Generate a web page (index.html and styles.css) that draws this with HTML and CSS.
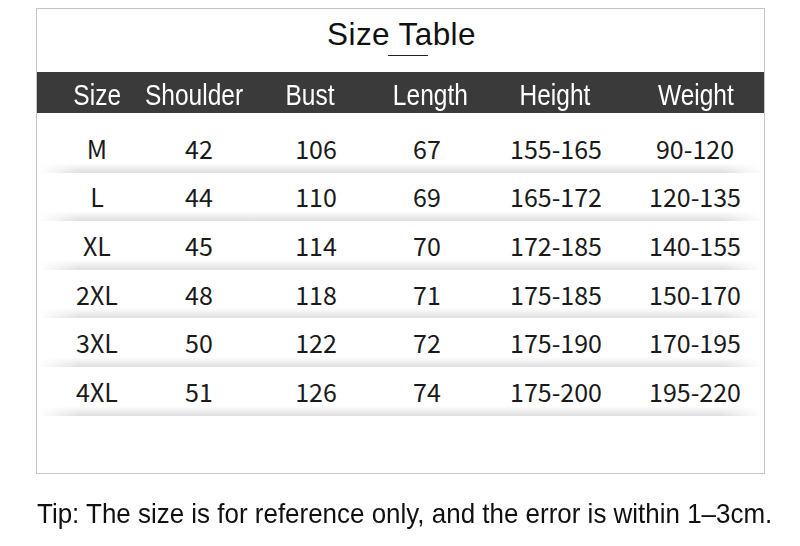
FILE: index.html
```html
<!DOCTYPE html>
<html>
<head>
<meta charset="utf-8">
<link rel="stylesheet" href="styles.css">
</head>
<body>
<div class="page">
  <div class="box">
    <div class="title-area">
      <h1 class="title">Size Table</h1>
      <div class="title-line"></div>
    </div>
    <div class="head">
      <span>Size</span><span>Shoulder</span><span>Bust</span><span>Length</span><span>Height</span><span>Weight</span>
    </div>
    <div class="rows">
      <div class="row"><span>M</span><span>42</span><span>106</span><span>67</span><span>155-165</span><span>90-120</span></div>
      <div class="row"><span>L</span><span>44</span><span>110</span><span>69</span><span>165-172</span><span>120-135</span></div>
      <div class="row"><span>XL</span><span>45</span><span>114</span><span>70</span><span>172-185</span><span>140-155</span></div>
      <div class="row"><span>2XL</span><span>48</span><span>118</span><span>71</span><span>175-185</span><span>150-170</span></div>
      <div class="row"><span>3XL</span><span>50</span><span>122</span><span>72</span><span>175-190</span><span>170-195</span></div>
      <div class="row"><span>4XL</span><span>51</span><span>126</span><span>74</span><span>175-200</span><span>195-220</span></div>
    </div>
  </div>
  <p class="tip">Tip: The size is for reference only, and the error is within 1–3cm.</p>
</div>
</body>
</html>
```

FILE: styles.css
```css
html, body {
  margin: 0;
  padding: 0;
  background: #fff;
}
.page {
  padding: 8px 0 0 36px;
  width: 800px;
  box-sizing: border-box;
}
.box {
  width: 729px;
  height: 466px;
  box-sizing: border-box;
  border: 1px solid #c4c4c4;
  background: #fff;
}
.title-area {
  height: 63px;
  display: flex;
  flex-direction: column;
  align-items: center;
}
.title {
  margin: 8px 0 0 0;
  font-family: "Liberation Sans", Arial, sans-serif;
  font-weight: normal;
  font-size: 31.5px;
  line-height: 34px;
  letter-spacing: 0.4px;
  color: #111;
  padding-left: 2px;
}
.title-line {
  width: 40px;
  height: 1px;
  background: #222;
  margin-top: 4px;
  margin-left: 14px;
}
.head {
  height: 41px;
  background: #3a3a3a;
  display: grid;
  grid-template-columns: 118px 76px 156px 84px 166px 116px;
  justify-items: center;
  padding-left: 1px;
  padding-top: 4px;
  box-sizing: border-box;
  align-items: center;
  font-family: "Liberation Sans", Arial, sans-serif;
  font-size: 29px;
  line-height: 32px;
  color: #fff;
}
.head span {
  display: inline-block;
  transform: scaleX(0.845);
}
.rows {
  padding-top: 11px;
}
.row {
  position: relative;
  height: 48.6px;
  box-sizing: border-box;
  display: grid;
  grid-template-columns: 118px 86px 148px 74px 184px 94px;
  justify-items: center;
  align-items: center;
  padding-left: 1px;
  padding-bottom: 1px;
  font-family: "Noto Sans CJK SC", "Noto Sans", sans-serif;
  font-size: 25px;
  color: #1a1a1a;
}
.row::after {
  content: "";
  position: absolute;
  left: 2px;
  right: 2px;
  bottom: 0;
  height: 10px;
  background: linear-gradient(to bottom, rgba(222,222,222,0) 0, #dedede 100%);
  -webkit-mask-image: linear-gradient(to right, transparent 0, #000 40px, #000 calc(100% - 40px), transparent 100%);
  mask-image: linear-gradient(to right, transparent 0, #000 40px, #000 calc(100% - 40px), transparent 100%);
}
.tip {
  margin: 22px 0 0 1px;
  font-family: "Liberation Sans", Arial, sans-serif;
  font-size: 28px;
  line-height: 36px;
  color: #111;
  white-space: nowrap;
  transform: scaleX(0.927);
  transform-origin: left center;
}
```
